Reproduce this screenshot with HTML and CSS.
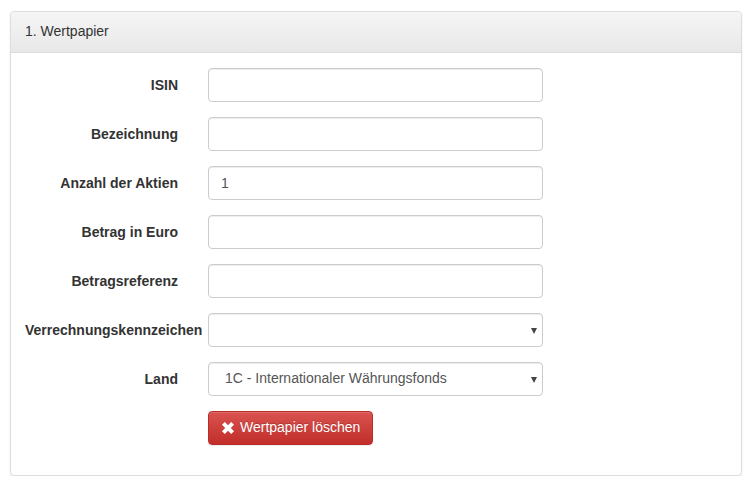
FILE: index.html
```html
<!DOCTYPE html>
<html lang="de">
<head>
<meta charset="utf-8">
<title>Wertpapier</title>
<link rel="stylesheet" href="styles.css">
</head>
<body>
<div class="panel">
  <div class="panel-heading">1. Wertpapier</div>
  <div class="panel-body">
    <form class="form">
      <div class="form-row">
        <label class="form-label">ISIN</label>
        <input class="form-control" type="text">
      </div>
      <div class="form-row">
        <label class="form-label">Bezeichnung</label>
        <input class="form-control" type="text">
      </div>
      <div class="form-row">
        <label class="form-label">Anzahl der Aktien</label>
        <input class="form-control" type="text" value="1">
      </div>
      <div class="form-row">
        <label class="form-label">Betrag in Euro</label>
        <input class="form-control" type="text">
      </div>
      <div class="form-row">
        <label class="form-label">Betragsreferenz</label>
        <input class="form-control" type="text">
      </div>
      <div class="form-row">
        <label class="form-label">Verrechnungskennzeichen</label>
        <div class="select-wrap">
          <select class="form-control select"><option></option></select>
        </div>
      </div>
      <div class="form-row">
        <label class="form-label">Land</label>
        <div class="select-wrap">
          <select class="form-control select"><option>1C - Internationaler Währungsfonds</option></select>
        </div>
      </div>
      <div class="form-row">
        <span class="form-label"></span>
        <div class="btn-cell">
          <button type="button" class="btn-danger">
            <svg class="icon" viewBox="0 0 12 12" width="12" height="12" aria-hidden="true"><path d="M2.8 0 L6 3.2 L9.2 0 L12 2.8 L8.8 6 L12 9.2 L9.2 12 L6 8.8 L2.8 12 L0 9.2 L3.2 6 L0 2.8 Z" fill="#fff"/></svg>
            <span>Wertpapier löschen</span>
          </button>
        </div>
      </div>
    </form>
  </div>
</div>
</body>
</html>
```
FILE: styles.css
```css
* { box-sizing: border-box; }
html, body { margin: 0; padding: 0; background: #fff; }
body {
  font-family: "Liberation Sans", Arial, Helvetica, sans-serif;
  font-size: 14px;
  line-height: 1.42857;
  color: #333;
  padding: 11px 9px 0 10px;
}
.panel {
  width: 732px;
  border: 1px solid #ddd;
  border-radius: 4px;
  background: #fff;
  box-shadow: 0 1px 2px rgba(0,0,0,.075);
}
.panel-heading {
  padding: 10px 15px 10px 14px;
  height: 41px;
  border-bottom: 1px solid #ddd;
  border-radius: 3px 3px 0 0;
  background: linear-gradient(to bottom, #f5f5f5 0%, #e8e8e8 100%);
  color: #333;
}
.panel-body { padding: 15px; }
.form { display: flex; flex-direction: column; }
.form-row {
  display: grid;
  grid-template-columns: 152px 335px;
  column-gap: 30px;
  margin-bottom: 15px;
  height: 34px;
}
.form-label {
  display: block;
  font-weight: bold;
  text-align: right;
  padding-top: 8px;
  white-space: nowrap;
  margin-left: -1px;
}
.form-control {
  display: block;
  width: 335px;
  height: 34px;
  padding: 6px 12px;
  font-family: inherit;
  font-size: 14px;
  line-height: 1.42857;
  color: #555;
  background: #fff;
  border: 1px solid #ccc;
  border-radius: 4px;
  box-shadow: inset 0 1px 1px rgba(0,0,0,.075);
  margin: 0;
}
.select-wrap { position: relative; width: 335px; height: 34px; }
.select {
  appearance: none;
  -webkit-appearance: none;
  padding-left: 16px;
}
.select-wrap::after {
  content: "";
  position: absolute;
  right: 6px;
  top: 15px;
  border-left: 3.5px solid transparent;
  border-right: 3.5px solid transparent;
  border-top: 6px solid #444;
}
.btn-cell { display: flex; }
.btn-danger {
  display: inline-flex;
  align-items: center;
  gap: 6px;
  height: 34px;
  width: 165px;
  padding: 6px 10px 6px 13px;
  white-space: nowrap;
  font-family: inherit;
  font-size: 14px;
  line-height: 1.42857;
  color: #fff;
  background: linear-gradient(to bottom, #d9534f 0%, #c12e2a 100%);
  border: 1px solid #b92c28;
  border-radius: 4px;
  box-shadow: inset 0 1px 0 rgba(255,255,255,.15), 0 1px 1px rgba(0,0,0,.075);
  text-shadow: 0 -1px 0 rgba(0,0,0,.2);
  cursor: pointer;
}
.icon { display: block; width: 12px; height: 12px; flex: none; }
```
